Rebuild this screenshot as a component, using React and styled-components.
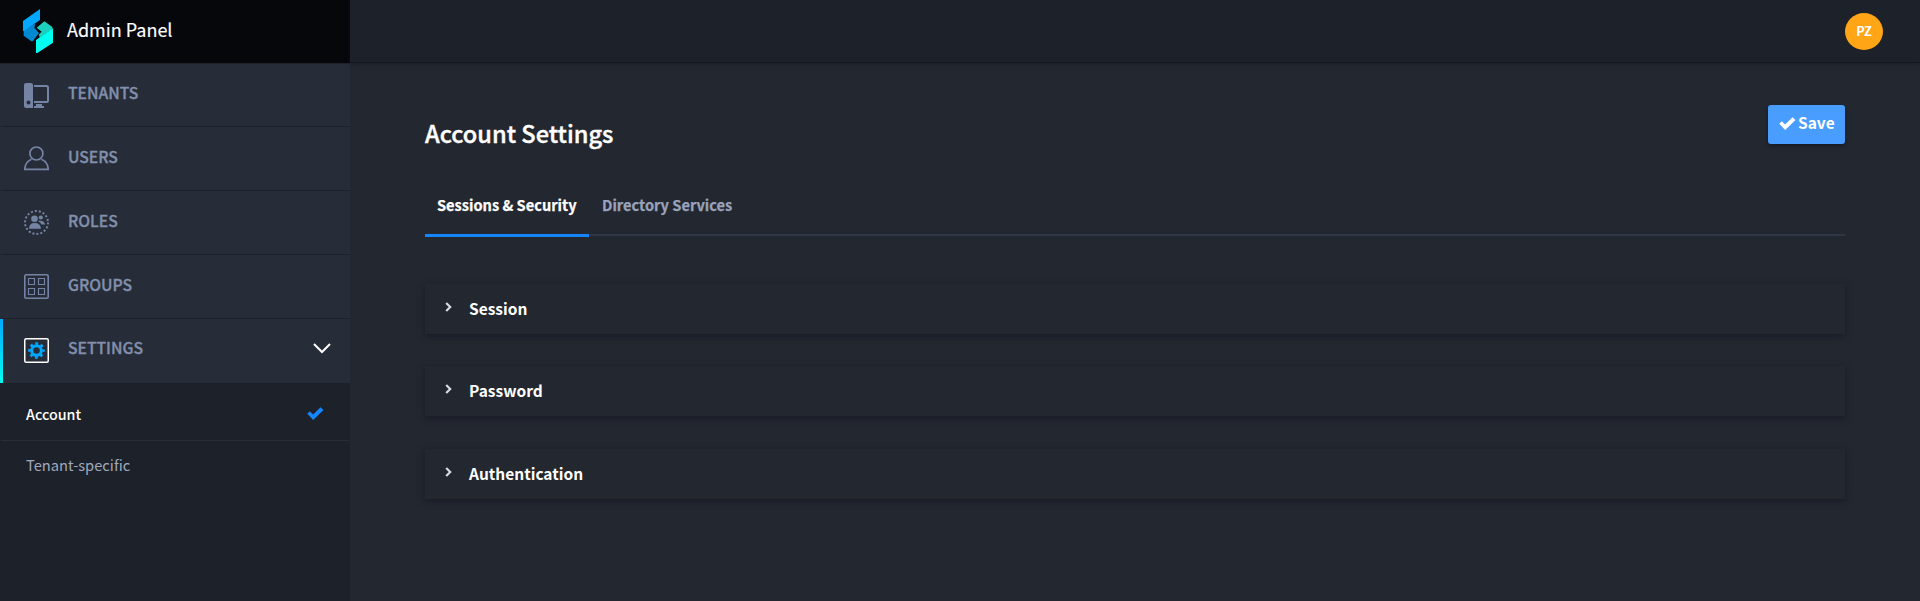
import React from 'react';
import styled, { createGlobalStyle } from 'styled-components';

const Global = createGlobalStyle`
  * { box-sizing: border-box; }
  body { margin: 0; background: #232730; font-family: "Noto Sans CJK SC", "Noto Sans", sans-serif; color: #fff; }
`;

const Page = styled.div`
  display: grid;
  grid-template-columns: 350px 1fr;
  height: 601px;
  overflow: hidden;
`;

const Sidebar = styled.aside`
  display: flex;
  flex-direction: column;
  background: #1d2129;
`;

const Brand = styled.div`
  display: flex;
  align-items: center;
  height: 64px;
  padding: 0 0 1px 23px;
  background: #05070b;
  border-bottom: 1px solid #1d2129;
`;

const Label = styled.span`
  display: block;
  white-space: nowrap;
  font-size: ${p => p.$size}px;
  font-weight: ${p => p.$weight || 400};
  color: ${p => p.$color || '#fff'};
  -webkit-text-stroke: ${p => p.$stroke || 0}px currentColor;
  line-height: 24px;
`;

const BrandName = styled(Label)`
  margin: -4px 0 0 14px;
`;

const NavItem = styled.div`
  display: flex;
  align-items: center;
  height: ${p => p.$height}px;
  padding: 0 19px ${p => (p.$active ? 2 : 0)}px 21px;
  background: #272d38;
  border-left: 3px solid transparent;
  border-image: ${p => (p.$active ? 'linear-gradient(#00a8ff, #00fff0) 1' : 'none')};
  border-bottom: ${p => (p.$active ? '0' : '1px solid #1d2129')};
`;

const NavLabel = styled(Label)`
  flex: 1;
  margin: ${p => p.$top}px 0 0 19px;
`;

const SubItem = styled.div`
  display: flex;
  align-items: center;
  justify-content: space-between;
  height: ${p => p.$height}px;
  margin: 0 1px;
  padding: ${p => p.$top}px 25px 0 25px;
  border-bottom: ${p => (p.$line ? '1px solid #282d38' : '0')};
`;

const Main = styled.div`
  display: flex;
  flex-direction: column;
`;

const TopBar = styled.header`
  display: flex;
  justify-content: flex-end;
  height: 63px;
  padding: 13px 37px 0 0;
  background: #1d2129;
  border-bottom: 1px solid #14171d;
  box-shadow: 0 1px 4px rgba(20, 20, 30, 0.5);
`;

const Avatar = styled.div`
  display: flex;
  align-items: center;
  justify-content: center;
  width: 38px;
  height: 37px;
  padding-bottom: 1px;
  border-radius: 50%;
  background: #ffa516;
`;

const Content = styled.main`
  padding: 42px 75px 0;
`;

const TitleRow = styled.div`
  display: flex;
  justify-content: space-between;
  height: 75px;
`;

const Title = styled(Label)`
  margin: 16px 0 0;
`;

const SaveButton = styled.button`
  display: flex;
  align-items: center;
  gap: 2px;
  width: 77px;
  height: 39px;
  padding: 0 0 2px 11px;
  border: 0;
  border-radius: 3px;
  background: #489dff;
  font-family: inherit;
  box-shadow: 0 2px 4px rgba(0, 0, 0, 0.35);
`;

const SaveLabel = styled(Label)`
  margin-top: -4px;
`;

const Tabs = styled.nav`
  display: flex;
  height: 56px;
  border-bottom: 2px solid #303744;
`;

const Tab = styled.div`
  height: 57px;
  width: ${p => p.$width}px;
  padding: 13px 0 0 ${p => (p.$active ? 12 : 13)}px;
  border-bottom: ${p => (p.$active ? '3px solid #1684fc' : '0')};
`;

const Panels = styled.div`
  display: grid;
  gap: 32.4px;
  margin-top: 48px;
`;

const Panel = styled.section`
  display: flex;
  align-items: center;
  gap: 17px;
  height: 50px;
  padding: 0 0 2px 20px;
  background: #232730;
  box-shadow: 0 2px 6px rgba(18, 18, 32, 0.6);
`;

const Logo = () => (
  <svg width="30" height="44" viewBox="0 0 90 132">
    <path d="M2 64L37 44L34 56L48 72L29 97H25L2 80Z" fill="#0088d0" />
    <path d="M51 0V33L2 67L0 65V36Z" fill="#00a8ff" />
    <path d="M64 37L88 54V60L50 86L48 76L56 68L41 56Z" fill="#1dcfbd" />
    <path d="M90 58V101L43 132H39V93Z" fill="#00fff0" />
  </svg>
);

const TenantsIcon = () => (
  <svg width="25" height="25" viewBox="0 0 25 25" fill="#7584a5">
    <path fillRule="evenodd" d="M2 0H7Q9 0 9 2V25H2Q0 25 0 23V2Q0 0 2 0ZM4.5 17.4A2 2 0 1 0 4.5 21.4A2 2 0 1 0 4.5 17.4Z" />
    <path d="M10 3H22.5Q24 3 24 4.5V17.5Q24 19 22.5 19H10" fill="none" stroke="#7584a5" strokeWidth="2" />
    <path d="M12 21H18V23H20V25H10V23H12Z" />
  </svg>
);

const UsersIcon = () => (
  <svg width="25" height="25" viewBox="0 0 25 25" fill="none" stroke="#7584a5" strokeWidth="1.7">
    <circle cx="12.4" cy="7.5" r="6.5" />
    <path d="M7.5 13.2Q1 16 .8 23.3H24.2Q24 16 17.5 13.2" />
  </svg>
);

const RolesIcon = () => (
  <svg width="25" height="25" viewBox="0 0 25 25" fill="#7584a5">
    <circle cx="12.5" cy="12.5" r="11.5" fill="none" stroke="#7584a5" strokeWidth="2" strokeDasharray="2 2.014" />
    <circle cx="16.8" cy="7.5" r="2.1" />
    <path d="M14.5 10.8Q20.5 10 21 14.5H17.5Q16.5 12 14.5 11.5Z" />
    <circle cx="10.5" cy="8.8" r="3.3" />
    <path d="M5 18.8Q5 13 10.7 13T17 18.8Z" />
  </svg>
);

const GroupsIcon = () => (
  <svg width="25" height="25" viewBox="0 0 25 25" fill="none" stroke="#7584a5">
    <rect x=".8" y=".8" width="23.4" height="23.4" rx="1.5" strokeWidth="1.6" />
    <path d="M4.5 4.5h6v6h-6zM14.5 4.5h6v6h-6zM4.5 14.5h6v6h-6zM14.5 14.5h6v6h-6z" strokeWidth="1.1" />
  </svg>
);

const SettingsIcon = () => (
  <svg width="25" height="25" viewBox="0 0 25 25" fill="none">
    <rect x=".75" y=".75" width="23.5" height="23.5" rx="1.5" stroke="#fff" strokeWidth="1.5" />
    <circle cx="12.5" cy="12.5" r="4.8" stroke="#00a8ff" strokeWidth="3" />
    <circle cx="12.5" cy="12.5" r="7" stroke="#00a8ff" strokeWidth="2.6" strokeDasharray="2.75 2.748" strokeDashoffset="1.375" />
  </svg>
);

const Lifted = styled.svg`
  margin-top: ${p => -p.$by}px;
`;

const Chevron = () => (
  <Lifted width="18" height="11" viewBox="0 0 18 11" fill="none" stroke="#fff" strokeWidth="2" $by={3}>
    <path d="M1 1L9 9L17 1" />
  </Lifted>
);

const Caret = () => (
  <Lifted width="7" height="10" viewBox="0 0 7 10" fill="none" stroke="#d5dae5" strokeWidth="2.2" $by={2}>
    <path d="M1.2 1L5.2 5L1.2 9" />
  </Lifted>
);

const Check = ({ color }) => (
  <Lifted width="17" height="13" viewBox="0 0 17 13" fill={color} $by={1}>
    <path d="M.3 6.8L2.8 4.3L6.2 7.5L13.5 .3L16.5 3L6.2 12.9Z" />
  </Lifted>
);

const nav = [
  { name: 'TENANTS', Icon: TenantsIcon, height: 63, top: -4 },
  { name: 'USERS', Icon: UsersIcon, height: 64, top: -3 },
  { name: 'ROLES', Icon: RolesIcon, height: 64, top: -3 },
  { name: 'GROUPS', Icon: GroupsIcon, height: 64, top: -3 },
  { name: 'SETTINGS', Icon: SettingsIcon, height: 64, top: -4, active: true },
];

export default function App() {
  return (
    <Page>
      <Global />
      <Sidebar>
        <Brand>
          <Logo />
          <BrandName $size={18} $stroke={0.15}>Admin Panel</BrandName>
        </Brand>
        {nav.map(({ name, Icon, height, top, active }) => (
          <NavItem key={name} $active={active} $height={height}>
            <Icon />
            <NavLabel $size={15.7} $weight={500} $stroke={0.3} $top={top} $color="#8290ae">{name}</NavLabel>
            {active && <Chevron />}
          </NavItem>
        ))}
        <SubItem $height={58} $top={5} $line>
          <Label $size={14.3} $weight={500}>Account</Label>
          <Check color="#1684fc" />
        </SubItem>
        <SubItem $height={46} $top={2}>
          <Label $size={14.7} $color="#a0a8bd">Tenant-specific</Label>
        </SubItem>
      </Sidebar>
      <Main>
        <TopBar>
          <Avatar><Label $size={12.7} $weight={700}>PZ</Label></Avatar>
        </TopBar>
        <Content>
          <TitleRow>
            <Title as="h1" $size={23.6} $weight={500} $stroke={0.4}>Account Settings</Title>
            <SaveButton>
              <Check color="#fff" />
              <SaveLabel $size={15.5} $weight={700}>Save</SaveLabel>
            </SaveButton>
          </TitleRow>
          <Tabs>
            <Tab $active $width={164}><Label $size={14.6} $weight={700} $stroke={0.25}>Sessions &amp; Security</Label></Tab>
            <Tab $width={164}><Label $size={14.6} $weight={700} $stroke={0.25} $color="#99a3bc">Directory Services</Label></Tab>
          </Tabs>
          <Panels>
            {['Session', 'Password', 'Authentication'].map(name => (
              <Panel key={name}>
                <Caret />
                <Label $size={15.5} $weight={700}>{name}</Label>
              </Panel>
            ))}
          </Panels>
        </Content>
      </Main>
    </Page>
  );
}
